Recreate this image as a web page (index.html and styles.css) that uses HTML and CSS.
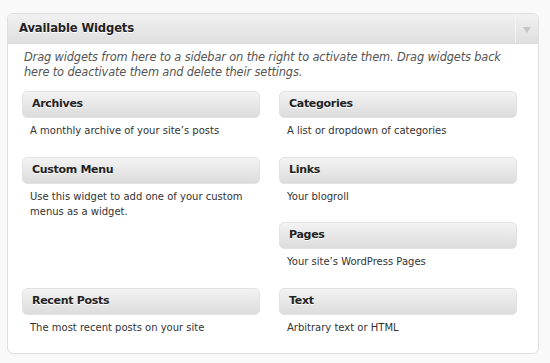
FILE: index.html
```html
<!DOCTYPE html>
<html lang="en">
<head>
    <meta charset="UTF-8">
    <title>Available Widgets</title>
    <link rel="stylesheet" href="styles.css">
</head>
<body>
    <div class="widgets-box">
        <div class="box-header">
            <h3 class="box-title">Available Widgets</h3>
            <div class="box-toggle"><span class="arrow"></span></div>
        </div>
        <p class="box-description">Drag widgets from here to a sidebar on the right to activate them. Drag widgets back here to deactivate them and delete their settings.</p>

        <div class="widget-list">
            <div class="widget">
                <div class="widget-top">Archives</div>
                <div class="widget-description">A monthly archive of your site’s posts</div>
            </div>
            <div class="widget">
                <div class="widget-top">Categories</div>
                <div class="widget-description">A list or dropdown of categories</div>
            </div>
            <div class="widget tall">
                <div class="widget-top">Custom Menu</div>
                <div class="widget-description">Use this widget to add one of your custom menus as a widget.</div>
            </div>
            <div class="widget">
                <div class="widget-top">Links</div>
                <div class="widget-description">Your blogroll</div>
            </div>
            <div class="widget">
                <div class="widget-top">Pages</div>
                <div class="widget-description">Your site’s WordPress Pages</div>
            </div>
            <div class="widget">
                <div class="widget-top">Recent Posts</div>
                <div class="widget-description">The most recent posts on your site</div>
            </div>
            <div class="widget">
                <div class="widget-top">Text</div>
                <div class="widget-description">Arbitrary text or HTML</div>
            </div>
        </div>
    </div>
</body>
</html>
```

FILE: styles.css
```css
* {
    margin: 0;
    padding: 0;
    box-sizing: border-box;
}

body {
    background: #f9f9f9;
    font-family: "DejaVu Sans", "Liberation Sans", sans-serif;
    color: #333;
    padding: 13px 11px 9px 7px;
}

.widgets-box {
    background: #fff;
    border: 1px solid #dfdfdf;
    border-radius: 6px;
    overflow: hidden;
}

.box-header {
    display: flex;
    height: 30px;
    background: linear-gradient(#f1f1f1, #dfdfdf);
    border-bottom: 1px solid #dcdcdc;
}

.box-title {
    flex: 1;
    font-size: 11.6px;
    font-weight: bold;
    letter-spacing: -0.15px;
    color: #222;
    padding: 7px 0 0 11px;
    text-shadow: 0 1px 0 #fff;
}

.box-toggle {
    width: 23px;
    border-left: 1px solid #f4f4f4;
    display: flex;
    align-items: center;
    justify-content: center;
}

.arrow {
    width: 0;
    height: 0;
    border-left: 4px solid transparent;
    border-right: 4px solid transparent;
    border-top: 6px solid #c4c4c4;
    margin-top: 2px;
}

.box-description {
    font-style: italic;
    font-size: 11.4px;
    letter-spacing: -0.15px;
    line-height: 15px;
    color: #555;
    padding: 6px 26px 0 16px;
}

.widget-list {
    display: grid;
    grid-template-columns: 238px 238px;
    grid-auto-rows: 65.6px;
    column-gap: 19px;
    padding: 11px 20px 0 14px;
}

.widget.tall {
    grid-row: span 2;
}

.widget-top {
    height: 27px;
    background: linear-gradient(#f3f3f3, #dcdcdc);
    border: 1px solid #e2e2e2;
    border-radius: 5px;
    font-size: 11px;
    font-weight: bold;
    letter-spacing: -0.3px;
    color: #222;
    padding: 5px 0 0 9px;
    text-shadow: 0 1px 0 #fff;
}

.widget-description {
    font-size: 10px;
    line-height: 15px;
    color: #333;
    padding: 5px 8px 0 8px;
}
```
